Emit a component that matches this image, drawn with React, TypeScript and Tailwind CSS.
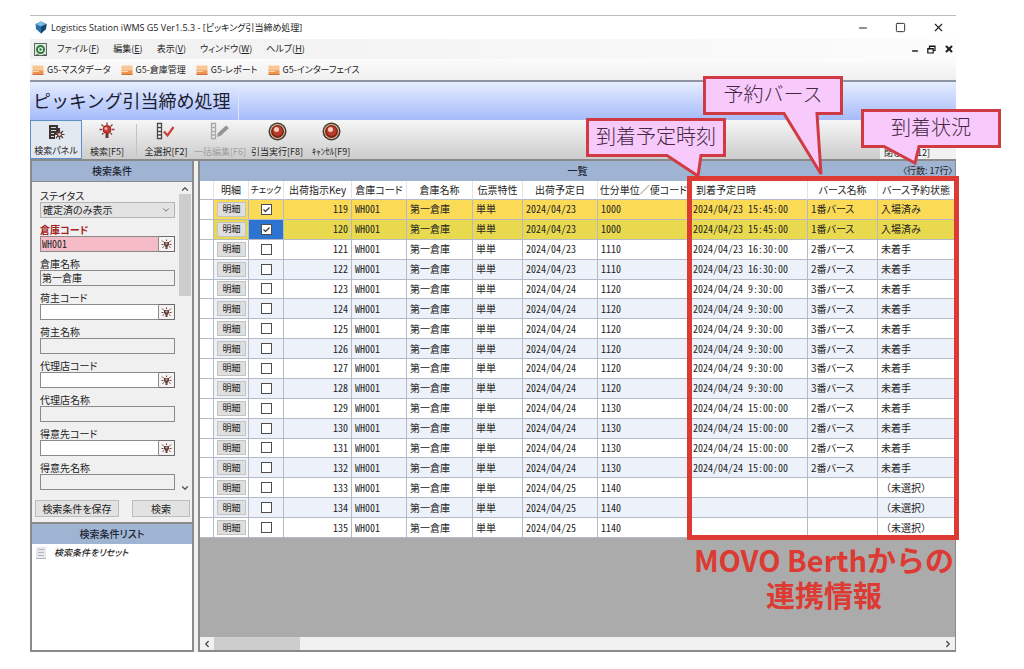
import { ReactNode } from 'react';
import { ChevronDown, ChevronLeft, ChevronRight, ChevronUp, Minus, Square, X } from 'lucide-react';

interface Shipment {
    key: number;
    date: string;
    sort: string;
    arrival: string;
    berth: string;
    status: string;
}

interface Field {
    id: string;
    label: string;
    value?: string;
    lookup?: boolean;
    required?: boolean;
}

const shipments: Shipment[] = [
    { key: 119, date: '2024/04/23', sort: '1000', arrival: '2024/04/23 15:45:00', berth: '1番バース', status: '入場済み' },
    { key: 120, date: '2024/04/23', sort: '1000', arrival: '2024/04/23 15:45:00', berth: '1番バース', status: '入場済み' },
    { key: 121, date: '2024/04/23', sort: '1110', arrival: '2024/04/23 16:30:00', berth: '2番バース', status: '未着手' },
    { key: 122, date: '2024/04/23', sort: '1110', arrival: '2024/04/23 16:30:00', berth: '2番バース', status: '未着手' },
    { key: 123, date: '2024/04/24', sort: '1120', arrival: '2024/04/24 9:30:00', berth: '3番バース', status: '未着手' },
    { key: 124, date: '2024/04/24', sort: '1120', arrival: '2024/04/24 9:30:00', berth: '3番バース', status: '未着手' },
    { key: 125, date: '2024/04/24', sort: '1120', arrival: '2024/04/24 9:30:00', berth: '3番バース', status: '未着手' },
    { key: 126, date: '2024/04/24', sort: '1120', arrival: '2024/04/24 9:30:00', berth: '3番バース', status: '未着手' },
    { key: 127, date: '2024/04/24', sort: '1120', arrival: '2024/04/24 9:30:00', berth: '3番バース', status: '未着手' },
    { key: 128, date: '2024/04/24', sort: '1120', arrival: '2024/04/24 9:30:00', berth: '3番バース', status: '未着手' },
    { key: 129, date: '2024/04/24', sort: '1130', arrival: '2024/04/24 15:00:00', berth: '2番バース', status: '未着手' },
    { key: 130, date: '2024/04/24', sort: '1130', arrival: '2024/04/24 15:00:00', berth: '2番バース', status: '未着手' },
    { key: 131, date: '2024/04/24', sort: '1130', arrival: '2024/04/24 15:00:00', berth: '2番バース', status: '未着手' },
    { key: 132, date: '2024/04/24', sort: '1130', arrival: '2024/04/24 15:00:00', berth: '2番バース', status: '未着手' },
    { key: 133, date: '2024/04/25', sort: '1140', arrival: '', berth: '', status: '（未選択）' },
    { key: 134, date: '2024/04/25', sort: '1140', arrival: '', berth: '', status: '（未選択）' },
    { key: 135, date: '2024/04/25', sort: '1140', arrival: '', berth: '', status: '（未選択）' },
];

const fields: Field[] = [
    { id: 'warehouse-code', label: '倉庫コード', value: 'WH001', lookup: true, required: true },
    { id: 'warehouse-name', label: '倉庫名称', value: '第一倉庫' },
    { id: 'owner-code', label: '荷主コード', lookup: true },
    { id: 'owner-name', label: '荷主名称' },
    { id: 'agency-code', label: '代理店コード', lookup: true },
    { id: 'agency-name', label: '代理店名称' },
    { id: 'customer-code', label: '得意先コード', lookup: true },
    { id: 'customer-name', label: '得意先名称' },
];

const menus = [
    ['ファイル', 'F'],
    ['編集', 'E'],
    ['表示', 'V'],
    ['ウィンドウ', 'W'],
    ['ヘルプ', 'H'],
];

const shortcuts = ['G5-マスタデータ', 'G5-倉庫管理', 'G5-レポート', 'G5-インターフェイス'];

const columns = ['', '明細', 'チェック', '出荷指示Key', '倉庫コード', '倉庫名称', '伝票特性', '出荷予定日', '仕分単位／便コード', '到着予定日時', 'バース名称', 'バース予約状態'];

function CubeIcon() {
    return (
        <svg width="12" height="13" viewBox="0 0 12 13">
            <path d="M6 0.5 11.5 3 11 8 6 12.5 1 8 0.5 3Z" fill="#2b6ea8" />
            <path d="M6 0.5 11.5 3 6 5.5 0.5 3Z" fill="#7fb9de" />
            <path d="M6 5.5 11.5 3 11 8 6 12.5Z" fill="#17466f" />
        </svg>
    );
}

function AppIcon() {
    return (
        <svg width="13" height="13" viewBox="0 0 13 13">
            <rect x="0.5" y="0.5" width="12" height="12" fill="#dfe9df" stroke="#5d6b5f" />
            <circle cx="6.5" cy="6.5" r="3.5" fill="#fff" stroke="#2f7a3c" strokeWidth="2" />
            <path d="M5.5 4.5 8.5 6.5 5.5 8.5Z" fill="#2f7a3c" />
            <path d="M9 12h3M2 12h3" stroke="#3a453b" />
        </svg>
    );
}

function FolderIcon() {
    return (
        <svg width="12" height="10" viewBox="0 0 12 10">
            <path d="M0.5 0.5H11.5V6H0.5Z" fill="#f9c795" />
            <path d="M0.5 5.5H11.5V9.5H0.5Z" fill="#ee9352" />
            <path d="M0.5 6.5H7" stroke="#fbd9b4" />
            <path d="M0.5 9.5H11.5" stroke="#cd7236" />
        </svg>
    );
}

function PanelIcon() {
    return (
        <svg width="18" height="18" viewBox="0 0 18 18">
            <path d="M2 2H11V5H13V8L8 12V16H2Z" fill="#3a3433" />
            <path d="M4 4.5H9M4 7.5H9M4 10.5H7M4 13.5H7" stroke="#d8d4d4" />
            <path d="M12.500 6.500V16.500M7.500 11.500H17.500M9 8 16 15M16 8 9 15" stroke="#4f3a36" strokeWidth="1.200" />
            <circle cx="12.500" cy="11.500" r="2" fill="#e7c2bd" stroke="#5b2f2b" />
        </svg>
    );
}

function BulbIcon() {
    return (
        <svg width="18" height="18" viewBox="0 0 18 18">
            <path d="M9 0.500V3M1.500 7.500H4M14 7.500H16.500M3.500 2.500 5.500 4.500M14.500 2.500 12.500 4.500M4 12.500 5.500 11M14 12.500 12.500 11" stroke="#8d3d38" strokeWidth="1.300" />
            <circle cx="9" cy="7.500" r="4" fill="#d0352f" stroke="#7b2a27" />
            <circle cx="8" cy="6.500" r="1.500" fill="#f6b3ac" />
            <path d="M7.500 11.500H10.500V16H7.500Z" fill="#6b3532" />
        </svg>
    );
}

function SelectAllIcon() {
    return (
        <svg width="20" height="18" viewBox="0 0 20 18">
            <path d="M1.500 1.500H5.500V16.500H1.500ZM1.500 5.500H5.500M1.500 9.500H5.500M1.500 13H5.500" fill="#fff" stroke="#4a4646" strokeWidth="1.300" />
            <path d="M8 9.500 11.500 13.500 17.500 5" fill="none" stroke="#cb4039" strokeWidth="2.200" />
        </svg>
    );
}

function BulkEditIcon() {
    return (
        <svg width="20" height="18" viewBox="0 0 20 18">
            <path d="M1.500 1.500H5.500V16.500H1.500ZM1.500 5.500H5.500M1.500 9.500H5.500M1.500 13H5.500" fill="#eee" stroke="#a9a9a9" strokeWidth="1.300" />
            <path d="M7 15 8 11 16 3.500 19 6 11 13.500Z" fill="#969696" />
        </svg>
    );
}

function OrbIcon() {
    return (
        <svg width="19" height="19" viewBox="0 0 19 19">
            <circle cx="9.500" cy="9.500" r="9" fill="#45382c" />
            <circle cx="9.500" cy="9.500" r="7.500" fill="#d8c7a4" />
            <circle cx="9.500" cy="9.500" r="6.500" fill="#7e2119" />
            <circle cx="9.500" cy="9" r="5" fill="#b93a2a" />
            <circle cx="8.500" cy="7.500" r="2.500" fill="#f3cdbd" />
        </svg>
    );
}

function LookupIcon() {
    return (
        <svg width="11" height="11" viewBox="0 0 11 11">
            <path d="M1 1.500 3 3.500M10 1.500 8 3.500M5.500 0.500V2M0.500 5.500H2.500M8.500 5.500H10.500M1.500 8.500 3 7.500M9.500 8.500 8 7.500" stroke="#5b4a47" />
            <path d="M3 3H8L8 6 6.500 8V10H4.500V8L3 6Z" fill="#64403b" />
            <circle cx="5.500" cy="4.500" r="1" fill="#e2b4ad" />
        </svg>
    );
}

function ToolButton({ icon, label, className = '' }: { icon: ReactNode; label: string; className?: string }) {
    return (
        <button className={`flex h-full flex-col items-center justify-between whitespace-nowrap pt-[2px] text-[9px] leading-[14px] ${className}`}>
            {icon}
            <span>{label}</span>
        </button>
    );
}

function PanelTitle({ children }: { children: ReactNode }) {
    return <h2 className="h-5 bg-[#9fb4d2] text-center text-[10px] font-medium leading-5 text-[#1d2433]">{children}</h2>;
}

function SearchField({ id, label, value = '', lookup, required }: Field) {
    return (
        <div>
            <label htmlFor={id} className={`block leading-[13px] ${required ? 'font-bold text-[#a3231f]' : ''}`}>
                {label}
            </label>
            <div className="flex h-4">
                <input
                    id={id}
                    defaultValue={value}
                    readOnly={!lookup}
                    className={`min-w-0 flex-1 border border-[#8b8b8b] px-px leading-3 [font-feature-settings:'hwid'] ${required ? 'bg-[#f5bcc8]' : lookup ? 'bg-white' : 'bg-[#f0f0f0]'}`}
                />
                {lookup && (
                    <button aria-label={`${label}を参照`} className="flex w-4 items-center justify-center border border-l-0 border-[#6d6d6d] bg-[#f5f2f1]">
                        <LookupIcon />
                    </button>
                )}
            </div>
        </div>
    );
}

function SearchPanel() {
    return (
        <aside className="flex w-[164px] shrink-0 flex-col border-x-2 border-b-2 border-[#8a8a8a] bg-[#f0f0f0]">
            <PanelTitle>検索条件</PanelTitle>
            <form className="flex border-t border-[#8a8a8a] pb-1">
                <div className="flex flex-1 flex-col gap-[5px] pb-[3px] pl-2 pt-[7px]">
                    <div>
                        <label htmlFor="status" className="block leading-[13px]">ステイタス</label>
                        <div className="relative">
                            <select id="status" className="block h-4 w-full appearance-none border border-[#b4b4b4] bg-[#e3e3e3] px-[2px] leading-3">
                                <option>確定済のみ表示</option>
                            </select>
                            <ChevronDown size={10} className="pointer-events-none absolute right-1 top-[3px] text-[#555]" />
                        </div>
                    </div>
                    {fields.map((field) => (
                        <SearchField key={field.id} {...field} />
                    ))}
                </div>
                <div className="ml-1 mr-px flex w-3 flex-col items-center justify-between pt-[2px] text-[#555]">
                    <div className="flex w-full flex-col items-center">
                        <ChevronUp size={10} strokeWidth={3} />
                        <div className="h-[102px] w-full bg-[#cdcdcd]" />
                    </div>
                    <ChevronDown size={10} strokeWidth={3} />
                </div>
            </form>
            <div className="flex justify-between pb-[5px] pl-[3px] pr-[2px] pt-[3px]">
                <button className="h-[17px] w-[84px] border border-[#bcbcbc] bg-[#e2e2e2] leading-[14px]">検索条件を保存</button>
                <button className="h-[17px] w-[58px] border border-[#bcbcbc] bg-[#e2e2e2] leading-[14px]">検索</button>
            </div>
            <div className="flex flex-1 flex-col border-t-2 border-[#8a8a8a]">
                <PanelTitle>検索条件リスト</PanelTitle>
                <div className="flex-1 bg-white px-1 pt-[2px]">
                    <a href="#reset" className="flex items-center gap-2 text-[9px] font-medium italic leading-[14px] text-[#222]">
                        <svg width="10" height="12" viewBox="0 0 10 12">
                            <path d="M0 0H10V12H0Z" fill="#e6e8ec" />
                            <path d="M2 2.500H8M2 5.500H8M2 8.500H8M0 11.500H10" stroke="#b3b9c4" />
                        </svg>
                        検索条件をリセット
                    </a>
                </div>
            </div>
        </aside>
    );
}

function ShipmentRow({ row, index }: { row: Shipment; index: number }) {
    const checked = index < 2;
    const focused = index === 1;
    const background = focused ? 'bg-[#e8d94f]' : checked ? 'bg-[#fbdb55]' : index % 2 ? 'bg-[#edf1f9]' : 'bg-white';

    return (
        <tr className={`h-[19px] ${background} [&>td]:border-b [&>td]:border-r [&>td]:border-[#b3bac6] [&>td]:px-[3px] [&>td]:py-0`}>
            <td className="bg-white" />
            <td>
                <button className="mx-auto block h-[15px] w-[29px] border border-[#c3c3c3] bg-[#dfdfdf] text-[9px] leading-3">明細</button>
            </td>
            <td className={focused ? 'bg-[#2c74d0]' : ''}>
                <div className="relative mx-auto h-[11px] w-[11px]">
                    <input
                        type="checkbox"
                        defaultChecked={checked}
                        aria-label={`${row.key}を選択`}
                        className="peer block h-full w-full appearance-none border border-[#4d4d4d] bg-white"
                    />
                    <svg viewBox="0 0 11 11" className="pointer-events-none absolute inset-0 hidden peer-checked:block">
                        <path d="M2.500 5.500 4.500 7.500 8.500 3.500" fill="none" stroke="#333" strokeWidth="1.200" />
                    </svg>
                </div>
            </td>
            <td className="text-right">{row.key}</td>
            <td>WH001</td>
            <td>第一倉庫</td>
            <td>単単</td>
            <td>{row.date}</td>
            <td>{row.sort}</td>
            <td>{row.arrival}</td>
            <td className="[font-feature-settings:'palt']">{row.berth}</td>
            <td className="[font-feature-settings:normal]">{row.status}</td>
        </tr>
    );
}

function ShipmentList() {
    return (
        <main className="flex min-w-0 flex-1 flex-col border-b-2 border-l-2 border-r border-[#8a8a8a] bg-[#ababab]">
            <div className="relative">
                <PanelTitle>一覧</PanelTitle>
                <span className="absolute right-[2px] top-0 text-[9px] leading-5">〈行数: 17行〉</span>
            </div>
            <table className="h-[357px] w-full table-fixed border-separate border-spacing-0 whitespace-nowrap leading-[14px] [font-feature-settings:'hwid']">
                <colgroup>
                    <col className="w-[14px]" />
                    <col className="w-[35px]" />
                    <col className="w-[35px]" />
                    <col className="w-[68px]" />
                    <col className="w-[55px]" />
                    <col className="w-[66px]" />
                    <col className="w-[50px]" />
                    <col className="w-[75px]" />
                    <col />
                    <col className="w-[118px]" />
                    <col className="w-[70px]" />
                    <col className="w-[77px]" />
                </colgroup>
                <thead className="[font-feature-settings:'palt']">
                    <tr className="h-[19px] bg-white">
                        {columns.map((name, i) => (
                            <th
                                key={i}
                                className={`border-b border-r border-b-[#b3bac6] border-r-[#e4e4e4] p-0 font-normal ${name === '到着予定日時' ? 'pl-[6px] text-left' : ''} ${name === 'チェック' ? 'text-[9px]' : ''}`}
                            >
                                {name}
                            </th>
                        ))}
                    </tr>
                </thead>
                <tbody>
                    {shipments.map((row, i) => (
                        <ShipmentRow key={row.key} row={row} index={i} />
                    ))}
                </tbody>
            </table>
            <div className="mt-auto flex h-[13px] items-center bg-[#f0f0f0] text-[#444]">
                <ChevronLeft size={10} strokeWidth={3} className="mx-[2px]" />
                <div className="h-full w-[86px] bg-[#cdcdcd]" />
                <ChevronRight size={10} strokeWidth={3} className="ml-auto mr-[2px]" />
            </div>
        </main>
    );
}

function Callout({ text, tail, className }: { text: string; tail: string; className: string }) {
    return (
        <div className={`absolute h-[39px] w-[140px] ${className}`}>
            <svg width="140" height="39" viewBox="0 0 140 39" className="absolute inset-0 overflow-visible">
                <path d={`M1.500 1.500H138.500V37.500H${tail}H1.500Z`} fill="#f8c9fb" stroke="#d03b43" strokeWidth="3" />
            </svg>
            <p className="relative text-center text-[20px] font-light leading-[36px] text-[#43283f] [font-feature-settings:normal]">{text}</p>
        </div>
    );
}

export default function App() {
    return (
        <div className="flex min-h-screen flex-col bg-white pb-[17px] pl-[30px] pr-[68px] pt-[15px] font-['Noto_Sans_CJK_JP',sans-serif] text-[10px] text-[#222] [font-feature-settings:'palt']">
            <div className="relative flex flex-1 flex-col border-t border-[#bdbdbd]">
                <header className="flex h-[23px] items-center gap-1 pl-[5px]">
                    <CubeIcon />
                    <h1 className="font-['Open_Sans','Noto_Sans_CJK_JP',sans-serif] text-[9px]">Logistics Station iWMS G5 Ver1.5.3 - [ピッキング引当締め処理]</h1>
                    <div className="ml-auto flex items-center gap-[26px] pr-[11px]">
                        <button aria-label="最小化"><Minus size={12} strokeWidth={2} /></button>
                        <button aria-label="最大化"><Square size={11} strokeWidth={2} /></button>
                        <button aria-label="閉じる"><X size={13} strokeWidth={2} /></button>
                    </div>
                </header>

                <nav className="flex h-5 items-center gap-[14px] bg-gradient-to-r from-[#f0f0f0] to-[#fcfcfc] pl-1 text-[9px]">
                    <AppIcon />
                    {menus.map(([name, key], i) => (
                        <button key={key} className={i === 0 ? '-ml-1' : ''}>
                            {name}(<u>{key}</u>)
                        </button>
                    ))}
                    <div className="ml-auto flex items-center gap-2 pr-[2px]">
                        <button aria-label="子ウィンドウを最小化" className="pt-1"><Minus size={8} strokeWidth={5} /></button>
                        <button aria-label="子ウィンドウを元に戻す">
                            <svg width="9" height="9" viewBox="0 0 9 9" fill="none" stroke="#111" strokeWidth="1.200">
                                <path d="M2.500 3V1H8V5.500H6.500M2.500 1.500H8" />
                                <path d="M0.800 3.500H6.200V8H0.800ZM0.800 4H6.200" />
                            </svg>
                        </button>
                        <button aria-label="子ウィンドウを閉じる"><X size={10} strokeWidth={5} /></button>
                    </div>
                </nav>

                <nav className="flex h-[21px] items-center gap-[10px] bg-gradient-to-b from-[#fcfcfc] to-[#efefef] pl-[2px] text-[9px]">
                    {shortcuts.map((name) => (
                        <a key={name} href="#menu" className="flex items-center gap-[3px]">
                            <FolderIcon />
                            {name}
                        </a>
                    ))}
                </nav>

                <div className="flex h-10 border-t-2 border-[#8f94a3] bg-gradient-to-b from-[#e6edff] to-[#a6bbfa]">
                    <h2 className="border-r border-[#dfe6fb] pl-[3px] pr-2 text-[18px] leading-9 text-[#1c2030] [font-feature-settings:normal]">ピッキング引当締め処理</h2>
                </div>

                <div className="flex h-[39px] bg-gradient-to-b from-[#f6f6f6] to-[#cccccc]">
                    <ToolButton icon={<PanelIcon />} label="検索パネル" className="w-[52px] border border-[#5f8fc9] bg-[#e2e8f0]" />
                    <ToolButton icon={<BulbIcon />} label="検索[F5]" className="w-[50px]" />
                    <div className="mx-1 my-1 w-px bg-[#c2c2c2]" />
                    <ToolButton icon={<SelectAllIcon />} label="全選択[F2]" className="w-[50px]" />
                    <ToolButton icon={<BulkEditIcon />} label="一括編集[F6]" className="w-[58px] text-[#a0a0a0]" />
                    <ToolButton icon={<OrbIcon />} label="引当実行[F8]" className="w-[56px]" />
                    <ToolButton icon={<OrbIcon />} label="ｷｬﾝｾﾙ[F9]" className="w-[52px]" />
                    <button className="ml-auto flex w-[76px] items-end self-end bg-[#f1f1f1] pl-1 text-[9px] leading-[13px]">閉じる[F12]</button>
                </div>

                <div className="flex flex-1 gap-1 border-t-2 border-[#8a8a8a] bg-[#f0f0f0]">
                    <SearchPanel />
                    <ShipmentList />
                </div>

                <div className="absolute right-[-3px] top-[160px] h-[364px] w-[272px] border-[5px] border-[#dc3a32]" />
                <Callout text="到着予定時刻" tail="115L112 58L81 37.500" className="right-[230px] top-[102px]" />
                <Callout text="予約バース" tail="114L118 98L81 37.500" className="right-[113px] top-[60px]" />
                <Callout text="到着状況" tail="58L54 54L23 37.500" className="right-[-45px] top-[93px]" />
                <p className="absolute right-0 top-[526px] w-[264px] whitespace-nowrap text-center text-[29px] font-bold leading-[35px] text-[#dc3a32] [font-feature-settings:normal]">
                    MOVO Berthからの
                    <br />
                    連携情報
                </p>
            </div>
        </div>
    );
}
